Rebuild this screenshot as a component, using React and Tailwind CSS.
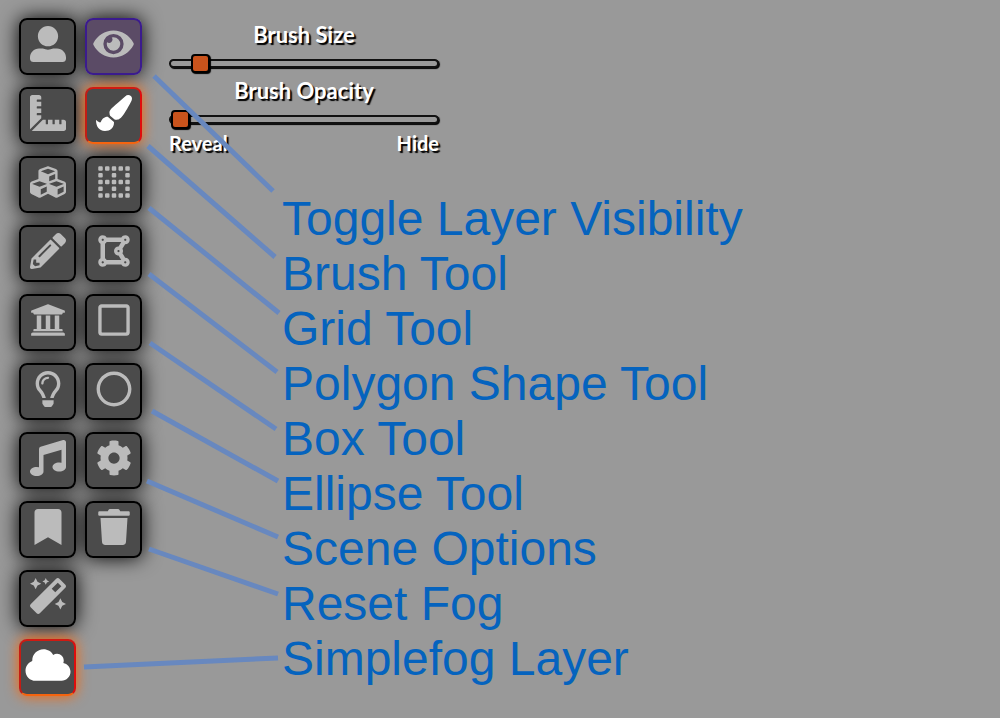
import {
  FaUserAlt,
  FaRulerCombined,
  FaCubes,
  FaPencilAlt,
  FaUniversity,
  FaRegLightbulb,
  FaMusic,
  FaBookmark,
  FaMagic,
  FaCloud,
  FaEye,
  FaPaintBrush,
  FaBorderNone,
  FaDrawPolygon,
  FaRegSquare,
  FaRegCircle,
  FaCog,
  FaTrash,
} from "react-icons/fa";

const layers = [
  { label: "Token Controls", Icon: FaUserAlt },
  { label: "Measurement Controls", Icon: FaRulerCombined },
  { label: "Tile Controls", Icon: FaCubes },
  { label: "Drawing Tools", Icon: FaPencilAlt },
  { label: "Wall Controls", Icon: FaUniversity },
  { label: "Lighting Controls", Icon: FaRegLightbulb },
  { label: "Ambient Sound Controls", Icon: FaMusic },
  { label: "Journal Notes", Icon: FaBookmark },
  { label: "Effects", Icon: FaMagic },
  { label: "Simplefog Layer", Icon: FaCloud, state: "active", iconWidth: "w-[46px]" },
];

const tools = [
  { label: "Toggle Layer Visibility", Icon: FaEye, state: "toggled", iconWidth: "w-[41px]" },
  { label: "Brush Tool", Icon: FaPaintBrush, state: "active" },
  { label: "Grid Tool", Icon: FaBorderNone },
  { label: "Polygon Shape Tool", Icon: FaDrawPolygon },
  { label: "Box Tool", Icon: FaRegSquare },
  { label: "Ellipse Tool", Icon: FaRegCircle },
  { label: "Scene Options", Icon: FaCog },
  { label: "Reset Fog", Icon: FaTrash },
];

const captions = [...tools.map((tool) => tool.label), "Simplefog Layer"];

// Leader lines from each control to its caption: x1, y1, x2, y2
const leaders = [
  [154, 76, 273, 191],
  [148, 146, 275, 257],
  [149, 208, 279, 313],
  [149, 274, 277, 372],
  [150, 343, 276, 429],
  [152, 411, 278, 481],
  [147, 481, 278, 537],
  [149, 549, 278, 594],
  [84, 667, 278, 658],
];

const stateStyles = {
  idle: "border-black bg-[#4b4b4b] text-[#bbbbbb]",
  toggled: "border-[#3b1b8e] bg-[#5b4b66] text-[#bbbbbb]",
  active:
    "border-t-[#d01a12] border-r-[#e00c0c] border-b-[#f5640f] border-l-[#c41c14] bg-[#4b4b4b] text-white",
};

const glowStyles = {
  idle: "shadow-[0_0_20px_#000]",
  toggled: "shadow-[0_0_20px_#000]",
  active: "shadow-[0_0_14px_#ff6400]",
};

// The glow sits on the list item so that it never darkens a neighbouring button.
function ControlButton({ label, Icon, state = "idle", iconWidth = "w-9" }) {
  return (
    <li className={`rounded-lg ${glowStyles[state]}`}>
      <button
        type="button"
        aria-label={label}
        aria-pressed={state !== "idle"}
        className={`relative z-10 flex size-[57px] items-center justify-center rounded-lg border-2 pb-1.5 ${stateStyles[state]}`}
      >
        <Icon className={`h-9 shrink-0 ${iconWidth}`} aria-hidden="true" />
      </button>
    </li>
  );
}

function ControlColumn({ label, items }) {
  return (
    <ul aria-label={label} className="flex shrink-0 flex-col gap-3">
      {items.map((item) => (
        <ControlButton key={item.label} {...item} />
      ))}
    </ul>
  );
}

function BrushSlider({ id, label, value }) {
  return (
    <div className="flex flex-col">
      <label htmlFor={id} className="text-center text-[22px] leading-8">
        {label}
      </label>
      <input
        id={id}
        type="range"
        min="0"
        max="100"
        defaultValue={value}
        className="h-6 w-full appearance-none bg-transparent [&::-webkit-slider-runnable-track]:box-border [&::-webkit-slider-runnable-track]:h-[9px] [&::-webkit-slider-runnable-track]:rounded-full [&::-webkit-slider-runnable-track]:border-2 [&::-webkit-slider-runnable-track]:border-[#111] [&::-webkit-slider-runnable-track]:bg-[#999] [&::-webkit-slider-runnable-track]:shadow-[1px_1px_1px_#000] [&::-webkit-slider-thumb]:mt-[-7px] [&::-webkit-slider-thumb]:box-border [&::-webkit-slider-thumb]:size-[19px] [&::-webkit-slider-thumb]:appearance-none [&::-webkit-slider-thumb]:rounded-[4px] [&::-webkit-slider-thumb]:border-2 [&::-webkit-slider-thumb]:border-black [&::-webkit-slider-thumb]:bg-[#c9531c] [&::-webkit-slider-thumb]:shadow-[1px_1px_1px_#000]"
      />
    </div>
  );
}

export default function App() {
  return (
    <div className="relative flex min-h-screen items-start bg-[#999999] px-[19px] pt-[18px] pb-5">
      <nav aria-label="Scene controls" className="flex gap-[9px]">
        <ControlColumn label="Layers" items={layers} />
        <ControlColumn label="Fog tools" items={tools} />
      </nav>

      <main className="ml-[27px] flex min-w-0 flex-1 flex-col">
        <section
          aria-label="Brush settings"
          className="flex w-[270px] flex-col pt-px font-['Lato',sans-serif] font-bold text-white [text-shadow:2px_2px_1px_#000]"
        >
          <BrushSlider id="brush-size" label="Brush Size" value={8} />
          <BrushSlider id="brush-opacity" label="Brush Opacity" value={0} />
          <div className="flex justify-between text-xl leading-6">
            <span>Reveal</span>
            <span>Hide</span>
          </div>
        </section>

        <ol className="mt-9 ml-[113px] font-['Liberation_Sans',Arial,sans-serif] text-5xl leading-[55px] text-[#0563be]">
          {captions.map((caption) => (
            <li key={caption}>{caption}</li>
          ))}
        </ol>
      </main>

      <svg
        className="pointer-events-none absolute top-0 left-0"
        width="300"
        height="700"
        viewBox="0 0 300 700"
        stroke="#6888bf"
        strokeWidth="5"
        aria-hidden="true"
      >
        {leaders.map(([x1, y1, x2, y2]) => (
          <line key={y1} x1={x1} y1={y1} x2={x2} y2={y2} />
        ))}
      </svg>
    </div>
  );
}
